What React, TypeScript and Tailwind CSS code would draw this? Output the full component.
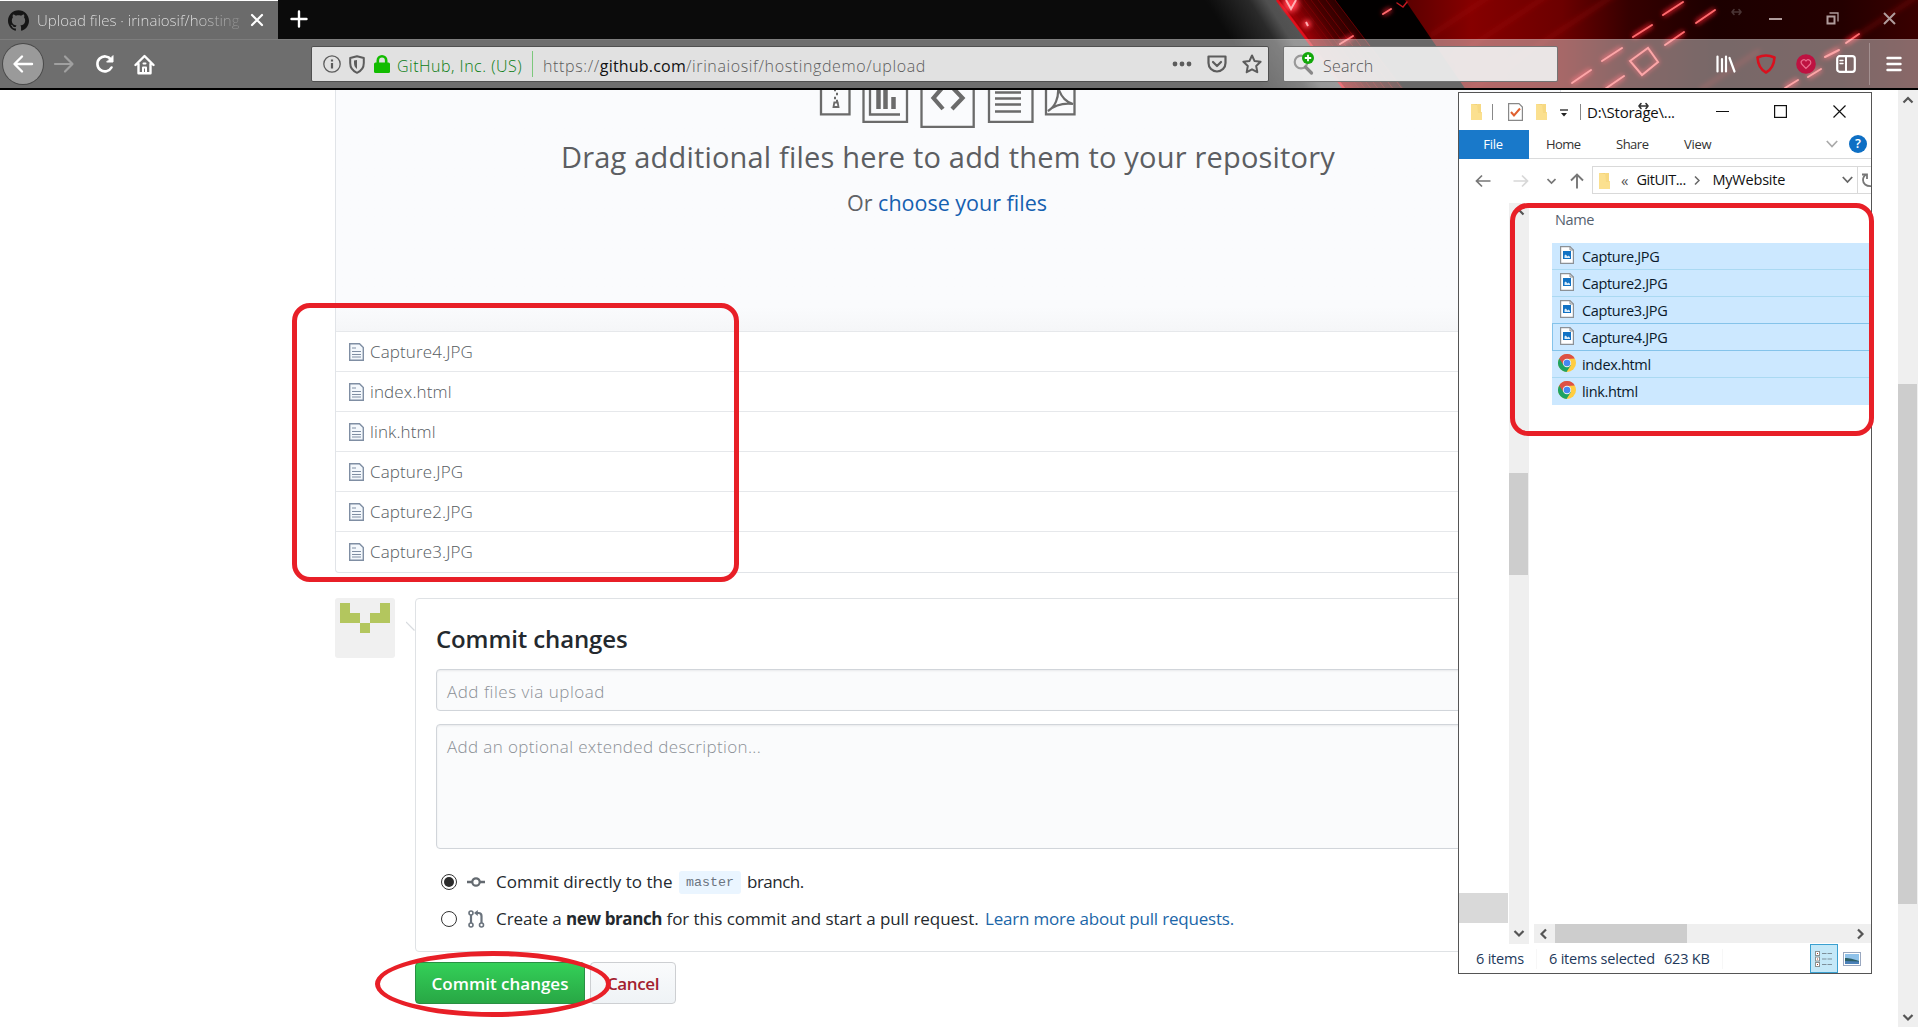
import React from 'react';
import { SiGithub } from 'react-icons/si';

const DASHES: [number, number, number, number][] = [
  [1663, 15, 1683, 2], [1696, 23, 1715, 10], [1633, 37, 1652, 25], [1665, 45, 1684, 32],
  [1602, 61, 1622, 48], [1572, 83, 1591, 70], [1605, 89, 1624, 76], [1846, 43, 1859, 34],
  [1825, 57, 1839, 50], [1785, 88, 1798, 80], [1808, 77, 1821, 69], [1383, 14, 1391, 9], [1340, 44, 1353, 36],
];

function HeaderArt() {
  return (
    <svg className="absolute inset-0 h-[90px] w-[1918px]" viewBox="0 0 1918 90" preserveAspectRatio="none">
      <defs>
        <linearGradient id="steel" gradientUnits="userSpaceOnUse" x1="1222" y1="24" x2="1282" y2="-14">
          <stop offset="0" stopColor="#0c0c0c" />
          <stop offset="0.5" stopColor="#2a2a2a" />
          <stop offset="0.7" stopColor="#505050" />
          <stop offset="1" stopColor="#585858" />
        </linearGradient>
        <linearGradient id="strip" gradientUnits="userSpaceOnUse" x1="1290" y1="20" x2="1350" y2="-20">
          <stop offset="0" stopColor="#b00008" />
          <stop offset="0.4" stopColor="#4a0000" />
          <stop offset="1" stopColor="#050000" />
        </linearGradient>
        <linearGradient id="red" gradientUnits="userSpaceOnUse" x1="1410" y1="0" x2="1918" y2="0">
          <stop offset="0" stopColor="#5e0000" />
          <stop offset="0.12" stopColor="#860000" />
          <stop offset="0.3" stopColor="#6c0000" />
          <stop offset="0.43" stopColor="#360000" />
          <stop offset="0.6" stopColor="#1c0000" />
          <stop offset="0.85" stopColor="#240000" />
          <stop offset="1" stopColor="#3a0000" />
        </linearGradient>
        <filter id="glow" x="-20%" y="-50%" width="140%" height="200%">
          <feGaussianBlur stdDeviation="2.5" />
        </filter>
      </defs>
      <rect width="1918" height="90" fill="#0b0b0b" />
      <polygon points="1205,0 1277,0 1345,90 1265,90" fill="url(#steel)" />
      <polygon points="1277,0 1918,0 1918,90 1345,90" fill="#020000" />
      <polygon points="1277,0 1335,0 1405,90 1345,90" fill="url(#strip)" />
      <g stroke="#8a0006" strokeWidth="0.8" opacity="0.8">
        {[0, 6, 12, 18, 24, 31, 38, 46, 55].map((d) => (
          <line key={d} x1={1280 + d} y1="0" x2={1348 + d} y2="90" />
        ))}
      </g>
      <line x1="1277" y1="0" x2="1345" y2="90" stroke="#e0101c" strokeWidth="2.5" />
      <g fill="#ff3a48" filter="url(#glow)">
        <circle cx="1291" cy="4" r="8" />
        <circle cx="1307" cy="24" r="4" />
      </g>
      <path d="M1286 0l5 9 5-9M1306 22l2 4" stroke="#ffb0b4" strokeWidth="2" fill="none" />
      <polygon points="1405,0 1918,0 1918,90 1466,90" fill="url(#red)" />
      <g stroke="#a80c0c" strokeWidth="5" opacity="0.3" filter="url(#glow)">
        <line x1="1430" y1="36" x2="1520" y2="-24" />
        <line x1="1450" y1="60" x2="1580" y2="-26" />
        <line x1="1470" y1="90" x2="1640" y2="-22" />
        <line x1="1820" y1="60" x2="1918" y2="-4" />
        <line x1="1700" y1="90" x2="1760" y2="50" />
      </g>
      <g stroke="#ff2030" strokeWidth="5" filter="url(#glow)" opacity="0.75">
        {DASHES.map(([a, b, c, d], i) => <line key={i} x1={a} y1={b} x2={c} y2={d} />)}
        <path d="M1630 61L1648 48L1658 62L1642 75Z" fill="none" strokeWidth="3" />
      </g>
      <g stroke="#ff6b6e" strokeWidth="2" strokeLinecap="round">
        {DASHES.map(([a, b, c, d], i) => <line key={i} x1={a} y1={b} x2={c} y2={d} />)}
        <path d="M1630 61L1648 48L1658 62L1642 75Z" fill="none" />
        <path d="M1397 3l6 4 4-5" fill="none" stroke="#c01820" strokeWidth="1.5" />
      </g>
    </svg>
  );
}

const S = { fill: 'none', strokeLinecap: 'round', strokeLinejoin: 'round' } as const;

function TabStrip() {
  return (
    <div className="relative flex h-[39px] items-center">
      <div className="flex h-full w-[278px] items-center border-t border-white bg-[#6b6b6b] pl-[8px]">
        <SiGithub className="size-[21px] shrink-0 text-[#161616]" />
        <span className="ml-[8px] w-[205px] overflow-hidden bg-gradient-to-r from-[#e4e4e4] from-75% to-[#858585] bg-clip-text text-[15px] font-light tracking-[0.02px] whitespace-nowrap text-transparent">
          Upload files · irinaiosif/hosting
        </span>
        <svg className="ml-[8px] size-[14px]" viewBox="0 0 14 14" {...S} stroke="#fff" strokeWidth="2.2"><path d="M2 2l10 10M12 2L2 12" /></svg>
      </div>
      <svg className="ml-[12px] size-[18px] -translate-y-[1px]" viewBox="0 0 18 18" {...S} stroke="#fff" strokeWidth="2.4"><path d="M9 1.5v15M1.5 9h15" /></svg>
      <div className="mr-[22px] ml-auto flex items-center gap-[44px] text-[#b09c9c]">
        <svg className="-mr-[17px] h-[8px] w-[11px] -translate-y-[8px]" viewBox="0 0 11 8" {...S} stroke="#4a3434" strokeWidth="1.6"><path d="M1 4h9M3 1.5L1 4l2 2.5M8 1.5L10 4 8 6.5" /></svg>
        <svg className="h-[12px] w-[13px] -translate-y-px" viewBox="0 0 13 12"><path d="M0 6h13" stroke="currentColor" strokeWidth="2" /></svg>
        <svg className="size-[13px] -translate-y-px" viewBox="0 0 13 13" fill="none" stroke="currentColor"><rect x="1.5" y="4.5" width="7" height="7" strokeWidth="2" /><path d="M3.5 1H12v8.5" strokeWidth="1.3" /></svg>
        <svg className="size-[13px] -translate-y-px" viewBox="0 0 13 13" stroke="currentColor" strokeWidth="2"><path d="M1 1l11 11M12 1L1 12" /></svg>
      </div>
    </div>
  );
}

function NavBar() {
  return (
    <div className="relative flex h-[51px] items-center border-t border-white/10 border-b-2 border-b-black bg-[#f8f8f8]/42">
      <div className="ml-[3px] flex size-[40px] shrink-0 items-center justify-center rounded-full bg-[#9a9a9a] ring-1 ring-[#4a4a4a]">
        <svg className="size-[22px]" viewBox="0 0 22 22" {...S} stroke="#fff" strokeWidth="2.4"><path d="M20 11H3M10 3.5L2.5 11l7.5 7.5" /></svg>
      </div>
      <svg className="ml-[10px] size-[22px]" viewBox="0 0 22 22" {...S} stroke="#a0a0a0" strokeWidth="2.2"><path d="M2 11h17M12 3.500l7.500 7.500-7.500 7.500" /></svg>
      <svg className="ml-[20px] size-[20px]" viewBox="0 0 20 20" {...S} stroke="#fff" strokeWidth="2.6"><path d="M16.500 13.500A7.500 7.500 0 1 1 16 5.500" /><path d="M18 2v6h-6z" fill="#fff" strokeWidth="1" /></svg>
      <svg className="ml-[19px] size-[21px]" viewBox="0 0 21 21" {...S} stroke="#fff" strokeWidth="2.400"><path d="M1.500 11L10.500 2l9 9M4.500 10v9.300h12V10" /><path d="M9 18.500v-5h3v5M9.500 9.500h2" strokeWidth="2" /></svg>

      <div className="ml-[156px] flex h-[36px] w-[958px] shrink-0 items-center rounded-[2px] border border-[#505050] bg-[#e1e1e1] pl-[11px]">
        <svg className="size-[18px]" viewBox="0 0 18 18" fill="none" stroke="#5c5c5c"><circle cx="9" cy="9" r="8.200" strokeWidth="1.300" /><path d="M9 8v5.500M9 4.500v2" strokeWidth="2.200" /></svg>
        <svg className="ml-[8px] h-[19px] w-[16px]" viewBox="0 0 16 19" {...S} stroke="#5c5c5c" strokeWidth="2"><path d="M8 1.200L1.200 3v5c0 4.800 2.500 8 6.800 9.800 4.300-1.800 6.800-5 6.800-9.800V3z" /><path d="M8 5v9C6 12.500 5 10.500 5 8V5.500z" fill="#5c5c5c" stroke="none" /></svg>
        <svg className="ml-[9px] h-[18px] w-[16px]" viewBox="0 0 16 18"><path d="M3.800 9V5.500a4.200 4.200 0 0 1 8.400 0V9" fill="none" stroke="#12bc00" strokeWidth="2.600" /><rect y="7.500" width="16" height="10.500" rx="1.500" fill="#12bc00" /></svg>
        <span className="ml-[7px] w-[135px] pt-[3px] text-[16px] font-light tracking-[0.5px] whitespace-nowrap text-[#0a7d14]">GitHub, Inc. (US)</span>
        <span className="h-[26px] w-px bg-[#7cc87c]" />
        <span className="ml-[10px] pt-[3px] text-[16px] font-light tracking-[0.62px] whitespace-nowrap text-[#5c5c5c]">
          https://<span className="font-normal tracking-[0.2px] text-[#111]">github.com</span>/irinaiosif/hostingdemo/upload
        </span>
        <div className="mr-[6px] ml-auto flex items-center">
          <svg className="h-[6px] w-[20px]" viewBox="0 0 20 6" fill="#5c5c5c"><circle cx="3" cy="3" r="2.400" /><circle cx="10" cy="3" r="2.400" /><circle cx="17" cy="3" r="2.400" /></svg>
          <svg className="ml-[15px] h-[18px] w-[20px]" viewBox="0 0 20 18" {...S} stroke="#5c5c5c" strokeWidth="2.200"><path d="M1.500 1.500h17v6.500a8.500 8.500 0 0 1-17 0z" /><path d="M6 7l4 4 4-4" /></svg>
          <svg className="ml-[15px] size-[20px]" viewBox="0 0 20 20" {...S} stroke="#5c5c5c" strokeWidth="2"><path d="M10 1.500l2.600 5.600 6 .7-4.400 4.200 1.100 6.200L10 15.300l-5.300 2.900 1.100-6.200L1.400 7.800l6-.7z" /></svg>
        </div>
      </div>

      <div className="ml-[14px] flex h-[36px] w-[275px] shrink-0 items-center rounded-[2px] border border-black/50 bg-[#efefef]/93 pl-[9px]">
        <svg className="h-[24px] w-[22px]" viewBox="0 0 22 24" fill="none"><circle cx="8" cy="10" r="6.300" stroke="#999" strokeWidth="2.200" /><path d="M12.500 15l6 6" stroke="#888" strokeWidth="3.200" strokeLinecap="round" /><circle cx="15" cy="6" r="6" fill="#12a80a" /><path d="M15 2.800v6.400M11.800 6h6.400" stroke="#fff" strokeWidth="1.800" /></svg>
        <span className="ml-[8px] pt-[3px] text-[16px] font-light tracking-[0.2px] text-[#555]">Search</span>
      </div>

      <div className="mr-[16px] ml-auto flex items-center">
        <svg className="h-[18px] w-[20px]" viewBox="0 0 20 18" {...S} stroke="#fff" strokeWidth="2.200"><path d="M1.500 1.500v15M6 4v12.500M10 1.500v15M13.500 3l5 13.500" /></svg>
        <svg className="ml-[20px] size-[20px]" viewBox="0 0 20 20" {...S} stroke="#d9101e" strokeWidth="2.600"><path d="M10 1.500c2.800 0 5.600.7 8.500 2C18 11 15 16 10 18.500 5 16 2 11 1.500 3.500 4.400 2.200 7.200 1.500 10 1.500z" /></svg>
        <svg className="ml-[20px] size-[20px]" viewBox="0 0 20 20"><circle cx="10" cy="10" r="9.800" fill="#be1241" /><path d="M10 14.500L5.700 10a2.600 2.600 0 0 1 4.300-3 2.600 2.600 0 0 1 4.300 3z" fill="none" stroke="#e96b8c" strokeWidth="1.200" /></svg>
        <svg className="ml-[20px] h-[18px] w-[20px]" viewBox="0 0 20 18" {...S} stroke="#fff"><rect x="1.200" y="1.200" width="17.600" height="15.600" rx="2.500" strokeWidth="2.200" /><path d="M10 1.500v15" strokeWidth="2" /><path d="M4 5.500h3M4 8.500h3" strokeWidth="1.400" /></svg>
        <span className="ml-[13px] h-[42px] w-px bg-[#a39090]" />
        <svg className="ml-[16px] h-[16px] w-[16px]" viewBox="0 0 16 16" {...S} stroke="#fff" strokeWidth="2.400"><path d="M1.500 2h13M1.500 8h13M1.500 14h13" /></svg>
      </div>
    </div>
  );
}

function DropIcons() {
  return (
    <svg className="h-[40px] w-[258px] shrink-0" viewBox="819 90 258 40" fill="none" stroke="#6b6b6b" strokeWidth="2.300">
      <path d="M821 80v34.300h28.500V80" />
      <path d="M834 90h2M836 94h2M834 98h2M836 101h2" strokeWidth="2.500" />
      <path d="M833.500 107l.8-4.500h3.400l.8 4.500z" strokeWidth="1.800" />
      <path d="M863.500 80v41.800H907V80" />
      <path d="M878.500 80v29M885.500 80v29M893.500 97v12" strokeWidth="4.500" />
      <path d="M870 80v34.500h30" />
      <path d="M921.500 80v46.800h52.200V80" />
      <path d="M943 87l-9.500 11 9.500 11M952 87l10.500 11L952 109" strokeWidth="4.200" />
      <path d="M989 80v41.800h43.500V80" />
      <path d="M995 92.500h26M995 98.500h26M995 104.500h26M995 111.500h26" strokeWidth="2.400" />
      <path d="M1046 80v34.300h28.500V80" />
      <path d="M1048 111c7-4 11-13 10-24 3 11 8 15 15 17-8-1-18 1-25 7z" strokeWidth="2.200" />
    </svg>
  );
}

function TextFileIcon() {
  return (
    <svg className="h-[18px] w-[15px] shrink-0" viewBox="0 0 15 18" fill="none" stroke="#7f8ea3">
      <path d="M.7.7h9.800l3.800 3.800v12.800H.7z" fill="#f4f8fc" strokeWidth="1.400" />
      <path d="M3 5h4M3 8.500h9M3 11.500h9M3 14h9" strokeWidth="1.200" />
    </svg>
  );
}

const UPLOADS = ['Capture4.JPG', 'index.html', 'link.html', 'Capture.JPG', 'Capture2.JPG', 'Capture3.JPG'];

function Page() {
  return (
    <main className="w-[1226px] shrink-0">
      <section className="rounded-b-[4px] border border-t-0 border-[#e1e4e8]">
        <div className="flex h-[241px] flex-col items-center bg-gradient-to-b from-[#fafbfd] from-90% to-[#f5f6f8]">
          <DropIcons />
          <p className="mt-[6px] text-[29px] leading-[42px] tracking-[0.19px] whitespace-nowrap text-[#5c5e62]">
            Drag additional files here to add them to your repository
          </p>
          <p className="mt-[10px] pr-[2px] text-[21.5px] leading-[30px] whitespace-nowrap text-[#606266]">
            Or <a className="text-[#1560b0]">choose your files</a>
          </p>
        </div>
        {UPLOADS.map((name) => (
          <div key={name} className="flex h-[40px] items-center gap-[6px] border-t border-[#e6e8eb] pl-[13px] last:h-[41px]">
            <TextFileIcon />
            <span className="text-[17px] font-light tracking-[0.12px] text-[#555b61]">{name}</span>
          </div>
        ))}
      </section>

      <div className="mt-[25px] flex">
        <svg className="size-[60px] shrink-0" viewBox="0 0 60 60">
          <rect width="60" height="60" rx="3" fill="#f0f0f0" />
          <path d="M5 5h10v10h10v10H5zM45 5h10v20H35V15h10zM25 25h10v10H25z" fill="#b3c65e" />
        </svg>
        <svg className="ml-[11px] mt-[22px] h-[12px] w-[9px] shrink-0" viewBox="0 0 9 12"><path d="M0 2l8.500 8.500" stroke="#d8dbdf" strokeWidth="1.200" /></svg>
        <div className="h-[354px] grow rounded-[4px] border border-[#dfe2e5] px-[20px]">
          <h3 className="mt-[23px] text-[24px] leading-[34px] font-semibold tracking-[-0.12px] text-[#24292e]">Commit changes</h3>
          <div className="mt-[13px] flex h-[42px] items-center rounded-[4px] border border-[#d1d5da] bg-[#fafbfc] px-[10px] pt-[3px] text-[17px] font-light tracking-[0.52px] text-[#8b9096] shadow-[inset_0_1px_2px_rgba(27,31,35,0.08)]">
            Add files via upload
          </div>
          <div className="mt-[13px] h-[125px] rounded-[4px] border border-[#d1d5da] bg-[#fafbfc] px-[10px] pt-[8px] text-[17px] leading-[28px] font-light tracking-[0.37px] text-[#8b9096] shadow-[inset_0_1px_2px_rgba(27,31,35,0.08)]">
            Add an optional extended description...
          </div>
          <div className="mt-[19px] flex h-[28px] items-center pl-[5px] text-[17px] whitespace-nowrap text-[#24292e]">
            <span className="flex size-[16px] items-center justify-center rounded-full border border-[#333] bg-white"><span className="size-[10px] rounded-full bg-[#2b2b2b]" /></span>
            <svg className="ml-[10px] h-[12px] w-[18px]" viewBox="0 0 18 12" fill="none" stroke="#646a70"><path d="M0 6h5M13 6h5" strokeWidth="2.400" /><circle cx="9" cy="6" r="3.700" strokeWidth="2.200" /></svg>
            <span className="ml-[11px] w-[183px]">Commit directly to the</span>
            <code className="flex h-[23px] w-[62px] items-center justify-center rounded-[3px] bg-[#eaf5ff] pt-[2px] font-['Liberation_Mono',monospace] text-[13.300px] font-normal text-[#6b7480]">master</code>
            <span className="ml-[6px] tracking-[-0.5px]">branch.</span>
          </div>
          <div className="mt-[9px] flex h-[28px] items-center pl-[5px] text-[17px] whitespace-nowrap text-[#24292e]">
            <span className="size-[16px] rounded-full border border-[#333] bg-white" />
            <svg className="ml-[11px] h-[18px] w-[17px]" viewBox="0 0 17 18" fill="none" stroke="#6a737d" strokeWidth="1.600"><circle cx="3" cy="3" r="2" /><circle cx="3" cy="15" r="2" /><circle cx="13.500" cy="15" r="2" /><path d="M3 5v8M13.500 13V6q0-3-3-3H8" strokeWidth="2.200" /><path d="M9.800 0v6L6 3z" fill="#6a737d" stroke="none" /></svg>
            <span className="ml-[11px] w-[489px] tracking-[-0.05px]">Create a <b className="font-bold tracking-[-0.4px]">new branch</b> for this commit and start a pull request.</span>
            <a className="tracking-[-0.19px] text-[#1b66a8]">Learn more about pull requests.</a>
          </div>
        </div>
      </div>
      <div className="mt-[10px] ml-[80px] flex gap-[5px] text-[17px] font-semibold">
        <button className="h-[42px] w-[170px] rounded-[4px] border border-[#2a8f43] bg-gradient-to-b from-[#34d058] to-[#28a745] pt-[2px] text-white">Commit changes</button>
        <button className="h-[42px] w-[86px] rounded-[4px] border border-[#cdcfd2] bg-gradient-to-b from-[#fafbfc] to-[#eff3f6] pt-[2px] tracking-[-0.4px] text-[#a3202f]">Cancel</button>
      </div>
    </main>
  );
}

function Chevron({ dir, className = '' }: { dir: 'up' | 'down' | 'left' | 'right'; className?: string }) {
  const d = { up: 'M1.500 7.500L6 3l4.500 4.500', down: 'M1.500 4L6 8.500 10.500 4', left: 'M8 1.500L3.500 6 8 10.500', right: 'M4 1.500L8.500 6 4 10.500' }[dir];
  return <svg className={`size-[12px] shrink-0 ${className}`} viewBox="0 0 12 12" fill="none" stroke="#555" strokeWidth="2.200"><path d={d} /></svg>;
}

function Folder({ className = '' }: { className?: string }) {
  return (
    <svg className={`h-[17px] w-[13px] shrink-0 ${className}`} viewBox="0 0 13 17">
      <path d="M1 1h6v14H1z" fill="#f0cf72" /><path d="M1 1l7 1v7h4v8H1z" fill="#fbe08f" /><path d="M7 1h4v9H8z" fill="#f7d983" />
    </svg>
  );
}

function JpgIcon() {
  return (
    <svg className="h-[18px] w-[14px]" viewBox="0 0 14 18"><path d="M.6.6h9.400l3.400 3.400v13.400H.6z" fill="#fff" stroke="#8c9196" strokeWidth="1.200" /><path d="M10 .6V4h3.400" fill="none" stroke="#8c9196" /><rect x="3" y="5" width="8" height="8" fill="#1272c4" /><path d="M4.500 12V9.500l1.300-1 1.700 2 1.200-1 1.300 1.500v1z" fill="#d8ecfb" /></svg>
  );
}

function ChromeIcon() {
  return (
    <svg className="size-[18px]" viewBox="0 0 18 18">
      <circle cx="9" cy="9" r="9" fill="#ffcd41" />
      <path d="M9 9L1.200 4.500A9 9 0 0 0 8.500 18L13 11z" fill="#1da362" />
      <path d="M1.200 4.500A9 9 0 0 1 16.800 4.500L9 5 5.500 11z" fill="#dd5144" />
      <circle cx="9" cy="9" r="4.200" fill="#f1f1f1" /><circle cx="9" cy="9" r="3.300" fill="#4688f1" />
    </svg>
  );
}

const FILES = ['Capture.JPG', 'Capture2.JPG', 'Capture3.JPG', 'Capture4.JPG', 'index.html', 'link.html'];

function rowStyle(i: number) {
  if (i === 3) return '-mt-px h-[28px] border border-r-0 border-[#84c3ea] pl-[4px]';
  if (i === 5) return 'h-[27px] border-b border-[#cce8ff] pl-[5px]';
  return 'h-[27px] border-b border-[#aad9f2] pl-[5px]';
}

function Explorer() {
  return (
    <div className="absolute top-[92px] left-[1458px] flex h-[882px] w-[414px] flex-col overflow-hidden border border-[#555] bg-white text-[14.500px] text-[#111]">
      <div className="flex h-[37px] shrink-0 items-center pl-[11px]">
        <Folder />
        <span className="ml-[9px] h-[16px] w-px bg-[#888]" />
        <svg className="ml-[15px] h-[18px] w-[15px]" viewBox="0 0 15 18"><path d="M.6.6h10.400l3.400 3.400v13.400H.6z" fill="#fff" stroke="#888" strokeWidth="1.200" /><path d="M3 9l3 3.500L12 5.500" fill="none" stroke="#e0602f" strokeWidth="2" /></svg>
        <Folder className="ml-[12px]" />
        <svg className="ml-[12px] mt-[3px] h-[8px] w-[8px]" viewBox="0 0 8 8"><path d="M0 1h8" stroke="#222" strokeWidth="1.300" /><path d="M1 4h6L4 7.500z" fill="#222" /></svg>
        <span className="ml-[12px] h-[16px] w-px bg-[#888]" />
        <span className="ml-[6px] w-[129px] pt-px text-[15px] tracking-[-0.25px]">D:\Storage\...</span>
        <svg className="h-[12px] w-[13px]" viewBox="0 0 13 12"><path d="M0 5.500h13" stroke="#111" /></svg>
        <svg className="ml-[45px] size-[13px]" viewBox="0 0 13 13"><rect x=".6" y=".6" width="11.800" height="11.800" fill="none" stroke="#111" strokeWidth="1.200" /></svg>
        <svg className="ml-[46px] size-[13px]" viewBox="0 0 13 13" stroke="#111" strokeWidth="1.200"><path d="M.5.5l12 12M12.500.5l-12 12" /></svg>
      </div>
      <div className="flex h-[29px] shrink-0 items-center border-b border-[#dadbdc] text-[13px] text-[#333]">
        <span className="flex h-[29px] w-[70px] items-center justify-center bg-[#1979ca] pt-[2px] pr-[2px] tracking-[-0.3px] text-white">File</span>
        <span className="ml-[17px] w-[70px] pt-[2px] tracking-[-0.6px]">Home</span>
        <span className="w-[68px] pt-[2px] tracking-[-0.5px]">Share</span>
        <span className="pt-[2px] tracking-[-0.3px]">View</span>
        <svg className="mr-[11px] ml-auto h-[8px] w-[12px]" viewBox="0 0 12 8" fill="none" stroke="#aaa" strokeWidth="1.700"><path d="M.8 1L6 6.500 11.200 1" /></svg>
        <span className="mr-[4px] flex size-[18px] items-center justify-center rounded-full bg-[#0e6fc4] text-[13px] font-semibold text-white">?</span>
      </div>
      <div className="flex h-[44px] shrink-0 items-center">
        <svg className="ml-[16px] size-[16px]" viewBox="0 0 16 16" fill="none" stroke="#777" strokeWidth="1.700"><path d="M15.500 8H2M7 2.500L1.500 8 7 13.500" /></svg>
        <svg className="ml-[22px] size-[16px]" viewBox="0 0 16 16" fill="none" stroke="#d8d8d8" strokeWidth="1.700"><path d="M.5 8H14M9 2.500L14.500 8 9 13.500" /></svg>
        <svg className="ml-[18px] h-[7px] w-[9px]" viewBox="0 0 9 7" fill="none" stroke="#777" strokeWidth="1.700"><path d="M.5 1l4 4 4-4" /></svg>
        <svg className="ml-[13px] size-[16px]" viewBox="0 0 16 16" fill="none" stroke="#777" strokeWidth="1.900"><path d="M8 15.500V2M2 7.500L8 1.500l6 6" /></svg>
        <div className="-mt-[2px] ml-[7px] -mr-px flex h-[28px] grow items-center border border-[#d9d9d9] pl-[5px]">
          <Folder />
          <span className="ml-[10px] text-[15px] leading-none text-[#555]">«</span>
          <span className="ml-[8px] w-[58px] tracking-[-0.45px] whitespace-nowrap">GitUIT...</span>
          <svg className="h-[9px] w-[6px]" viewBox="0 0 6 9" fill="none" stroke="#666" strokeWidth="1.500"><path d="M1 .5l4 4-4 4" /></svg>
          <span className="ml-[12px] tracking-[-0.2px]">MyWebsite</span>
          <svg className="mr-[4px] ml-auto h-[8px] w-[11px] shrink-0" viewBox="0 0 11 8" fill="none" stroke="#666" strokeWidth="1.800"><path d="M.8 1l4.700 5L10.200 1" /></svg>
          <span className="h-full w-px bg-[#d9d9d9]" />
          <svg className="ml-[3px] h-[16px] w-[10px] shrink-0" viewBox="0 0 10 16" fill="none" stroke="#777" strokeWidth="1.800"><path d="M10 14.200C5 14.500 2 11.500 2 8c0-2.500 1.500-4.500 3.500-5.500M1 2.500h5V7" /></svg>
        </div>
      </div>
      <div className="flex grow">
        <div className="flex w-[50px] flex-col justify-end pb-[21px]"><span className="h-[30px] w-[49px] bg-[#d9d9d9]" /></div>
        <div className="flex w-[20px] flex-col items-center bg-[#efefef] pr-px">
          <Chevron dir="up" className="mt-[4px]" />
          <span className="mt-[254px] h-[102px] w-[19px] bg-[#cdcdcd]" />
          <Chevron dir="down" className="mt-auto mb-[5px]" />
        </div>
        <div className="flex grow flex-col pl-[5px]">
          <span className="mt-[7px] ml-[21px] leading-[20px] tracking-[-0.35px] text-[#56616e]">Name</span>
          <div className="mt-[13px] mr-[2px] ml-[18px]">
            {FILES.map((f, i) => (
              <div key={f} className={`flex items-center bg-[#cce8ff] ${rowStyle(i)}`}>
                <span className="flex w-[20px] -translate-y-px items-center justify-center">{i < 4 ? <JpgIcon /> : <ChromeIcon />}</span>
                <span className="ml-[5px] translate-y-px tracking-[-0.34px] text-[#0b1a2b]">{f}</span>
              </div>
            ))}
          </div>
          <div className="mt-auto mb-px flex h-[19px] items-center bg-[#efefef] pr-[5px]">
            <Chevron dir="left" className="ml-[4px]" />
            <span className="ml-[5px] h-[19px] w-[132px] bg-[#cdcdcd]" />
            <Chevron dir="right" className="ml-auto" />
          </div>
        </div>
      </div>
      <div className="flex h-[29px] shrink-0 items-center pl-[17px] tracking-[-0.2px] whitespace-nowrap text-[#1e395b]">
        <span className="w-[60px]">6 items</span>
        <span className="mr-[12px] h-[20px] w-px bg-[#f7f7f7]" />
        <span className="w-[115px]">6 items selected</span>
        <span className="w-[58px]">623 KB</span>
        <span className="h-[20px] w-px bg-[#f7f7f7]" />
        <span className="ml-auto flex h-[29px] w-[28px] items-center justify-center border border-[#3aa0d0] bg-[#c4e8f8]">
          <svg className="h-[16px] w-[18px]" viewBox="0 0 18 16"><g fill="#fff" stroke="#8a9090"><rect x=".5" y=".5" width="4" height="4" /><rect x=".5" y="6" width="4" height="4" /><rect x=".5" y="11.500" width="4" height="4" /></g><path d="M7 2.500h11M7 8h11M7 13.500h11" stroke="#7d8f9a" strokeDasharray="4.500 1" /><path d="M2 2.500h1M2 8h1M2 13.500h1" stroke="#b04020" /></svg>
        </span>
        <svg className="mr-[10px] ml-[5px] h-[14px] w-[18px]" viewBox="0 0 18 14"><rect x=".5" y=".5" width="17" height="13" fill="#fff" stroke="#9aa8c0" /><rect x="2" y="2" width="14" height="10" fill="#8fc2ea" /><path d="M2 6c5 0 8 1 14 3v1H2z" fill="#2c5f66" /><path d="M2 9l14 .5V12H2z" fill="#4a80b8" /></svg>
      </div>
    </div>
  );
}

export default function App() {
  return (
    <div className="relative h-[1027px] w-[1918px] overflow-hidden bg-white font-['Open_Sans','Noto_Sans',sans-serif] text-[#24292e]">
      <header className="relative h-[90px]">
        <HeaderArt />
        <TabStrip />
        <NavBar />
      </header>
      <div className="flex h-[937px] pl-[335px]">
        <Page />
        <div className="ml-auto flex w-[20px] shrink-0 flex-col items-center bg-[#efefef]">
          <Chevron dir="up" className="mt-[5px]" />
          <span className="mt-[277px] mr-px h-[520px] w-[19px] bg-[#cdcdcd]" />
          <Chevron dir="down" className="mt-auto mb-[4px]" />
        </div>
      </div>
      <Explorer />
      <svg className="absolute top-[101px] left-[1638px] h-[10px] w-[11px]" viewBox="0 0 11 10" {...S} stroke="#333" strokeWidth="1.600"><path d="M1 5h9M3 2.500L1 5l2 2.500M8 2.500L10 5 8 7.500" /></svg>
      <div className="absolute top-[303px] left-[292px] h-[279px] w-[447px] rounded-[18px] border-[5px] border-[#e81f27]" />
      <div className="absolute top-[203px] left-[1510px] h-[233px] w-[364px] rounded-[18px] border-[5px] border-[#e81f27]" />
      <div className="absolute top-[951px] left-[375px] h-[66px] w-[236px] rounded-[50%] border-[5px] border-[#e81f27]" />
    </div>
  );
}
